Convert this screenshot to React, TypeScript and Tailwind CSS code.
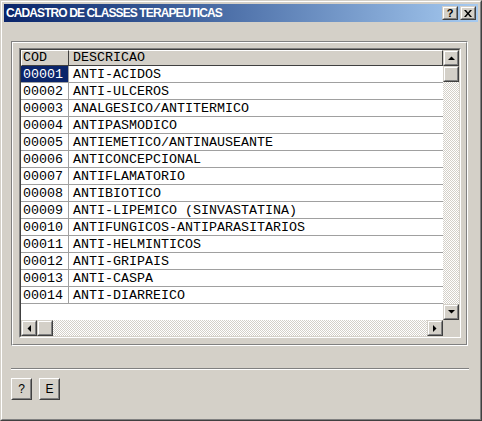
import type { FC, ReactNode } from 'react';

const rows: [string, string][] = [
  ['00001', 'ANTI-ACIDOS'],
  ['00002', 'ANTI-ULCEROS'],
  ['00003', 'ANALGESICO/ANTITERMICO'],
  ['00004', 'ANTIPASMODICO'],
  ['00005', 'ANTIEMETICO/ANTINAUSEANTE'],
  ['00006', 'ANTICONCEPCIONAL'],
  ['00007', 'ANTIFLAMATORIO'],
  ['00008', 'ANTIBIOTICO'],
  ['00009', 'ANTI-LIPEMICO (SINVASTATINA)'],
  ['00010', 'ANTIFUNGICOS-ANTIPARASITARIOS'],
  ['00011', 'ANTI-HELMINTICOS'],
  ['00012', 'ANTI-GRIPAIS'],
  ['00013', 'ANTI-CASPA'],
  ['00014', 'ANTI-DIARREICO'],
];

// win2k raised bevel: face/white outside-in on top-left, dark/gray on bottom-right
const Raised: FC<{ className?: string; children?: ReactNode }> = ({ className = '', children }) => (
  <div className={`border border-t-[#d4d0c8] border-l-[#d4d0c8] border-b-[#404040] border-r-[#404040] bg-[#d4d0c8] ${className}`}>
    <div className="w-full h-full border border-t-white border-l-white border-b-[#808080] border-r-[#808080] flex items-center justify-center">
      {children}
    </div>
  </div>
);

const Arrow: FC<{ dir: 'up' | 'down' | 'left' | 'right' }> = ({ dir }) => {
  const pts = {
    up: '0,4 7,4 3.5,0.5',
    down: '0,0 7,0 3.5,3.5',
    left: '4,0 4,7 0.5,3.5',
    right: '0,0 0,7 3.5,3.5',
  }[dir];
  const vert = dir === 'up' || dir === 'down';
  return (
    <svg width={vert ? 7 : 4} height={vert ? 4 : 7} viewBox={vert ? '0 0 7 4' : '0 0 4 7'}>
      <polygon points={pts} fill="#000" />
    </svg>
  );
};

const track = 'bg-[repeating-conic-gradient(#d4d0c8_0_25%,#ffffff_0_50%)] bg-[length:2px_2px]';

const PushButton: FC<{ label: string }> = ({ label }) => (
  <div className="w-[21px] h-[22px] border border-t-white border-l-white border-b-[#404040] border-r-[#404040] bg-[#d4d0c8]">
    <div className="w-full h-full border border-t-[#d4d0c8] border-l-[#d4d0c8] border-b-[#808080] border-r-[#808080] flex items-center justify-center text-[12px] text-black font-['Liberation_Sans',sans-serif]">
      {label}
    </div>
  </div>
);

export default function App() {
  return (
    <div className="w-[482px] h-[421px] border border-t-[#d4d0c8] border-l-[#d4d0c8] border-b-[#404040] border-r-[#404040] bg-[#d4d0c8]">
      <div className="w-full h-full border border-t-white border-l-white border-b-[#808080] border-r-[#808080] p-[2px] flex flex-col">
        {/* title bar */}
        <div className="h-[18px] shrink-0 bg-gradient-to-r from-[#0a246a] to-[#a6caf0] flex items-center pl-[2px] pr-[2px]">
          <span className="text-white font-bold text-[12px] font-['Liberation_Sans',sans-serif] tracking-[-0.9px] flex-1">
            CADASTRO DE CLASSES TERAPEUTICAS
          </span>
          <Raised className="w-[16px] h-[14px]">
            <span className="text-[11px] font-bold leading-none text-black font-['Liberation_Sans',sans-serif]">?</span>
          </Raised>
          <Raised className="w-[16px] h-[14px] ml-[2px]">
            <svg width="8" height="7" viewBox="0 0 8 7">
              <path d="M0 0h2l2 2.5L6 0h2L5 3.5 8 7H6L4 4.5 2 7H0l3-3.5z" fill="#000" />
            </svg>
          </Raised>
        </div>

        {/* client */}
        <div className="flex-1 pt-[19px] pl-[7px] flex flex-col">
          {/* group panel, etched */}
          <div className="w-[457px] h-[305px] border border-t-[#808080] border-l-[#808080] border-b-white border-r-white">
            <div className="w-full h-full border border-t-white border-l-white border-b-[#808080] border-r-[#808080] pt-[5px] pl-[6px]">
              {/* grid, sunken */}
              <div className="w-[442px] h-[290px] border border-t-[#808080] border-l-[#808080] border-b-white border-r-white">
                <div className="w-full h-full border border-t-[#404040] border-l-[#404040] border-b-[#d4d0c8] border-r-[#d4d0c8] flex flex-col bg-white font-['Liberation_Mono',monospace] text-[13.33px] text-black">
                  <div className="flex h-[270px]">
                    <div className="w-[422px] flex flex-col">
                      <div className="flex h-[16px] bg-[#d4d0c8] leading-[14px]">
                        <div className="w-[48px] border border-t-white border-l-white border-b-[#404040] border-r-[#404040] pl-[1px]">COD</div>
                        <div className="flex-1 border border-t-white border-l-0 border-b-[#404040] border-r-[#404040] pl-[4px]">DESCRICAO</div>
                      </div>
                      {rows.map(([cod, desc], i) => (
                        <div key={cod} className="flex h-[17px] border-b border-[#a0a0a0] leading-[17px]">
                          <div className={`w-[48px] border-r border-[#a0a0a0] pl-[2px] ${i === 0 ? 'bg-[#0a246a] text-white' : ''}`}>{cod}</div>
                          <div className="flex-1 pl-[4px] whitespace-pre">{desc}</div>
                        </div>
                      ))}
                    </div>
                    {/* vertical scrollbar */}
                    <div className="w-[16px] flex flex-col">
                      <Raised className="w-[16px] h-[16px]"><Arrow dir="up" /></Raised>
                      <Raised className="w-[16px] h-[16px]" />
                      <div className={`flex-1 ${track}`} />
                      <Raised className="w-[16px] h-[16px]"><Arrow dir="down" /></Raised>
                    </div>
                  </div>
                  {/* horizontal scrollbar */}
                  <div className="flex h-[16px]">
                    <div className="w-[422px] flex">
                      <Raised className="w-[16px] h-[16px]"><Arrow dir="left" /></Raised>
                      <Raised className="w-[16px] h-[16px]" />
                      <div className={`flex-1 ${track}`} />
                      <Raised className="w-[16px] h-[16px]"><Arrow dir="right" /></Raised>
                    </div>
                    <div className="w-[16px] bg-[#d4d0c8]" />
                  </div>
                </div>
              </div>
            </div>
          </div>

          {/* separator */}
          <div className="mt-[22px] w-[458px] border-t border-t-[#808080] border-b border-b-white" />

          {/* bottom buttons */}
          <div className="mt-[8px] flex gap-[7px]">
            <PushButton label="?" />
            <PushButton label="E" />
          </div>
        </div>
      </div>
    </div>
  );
}
